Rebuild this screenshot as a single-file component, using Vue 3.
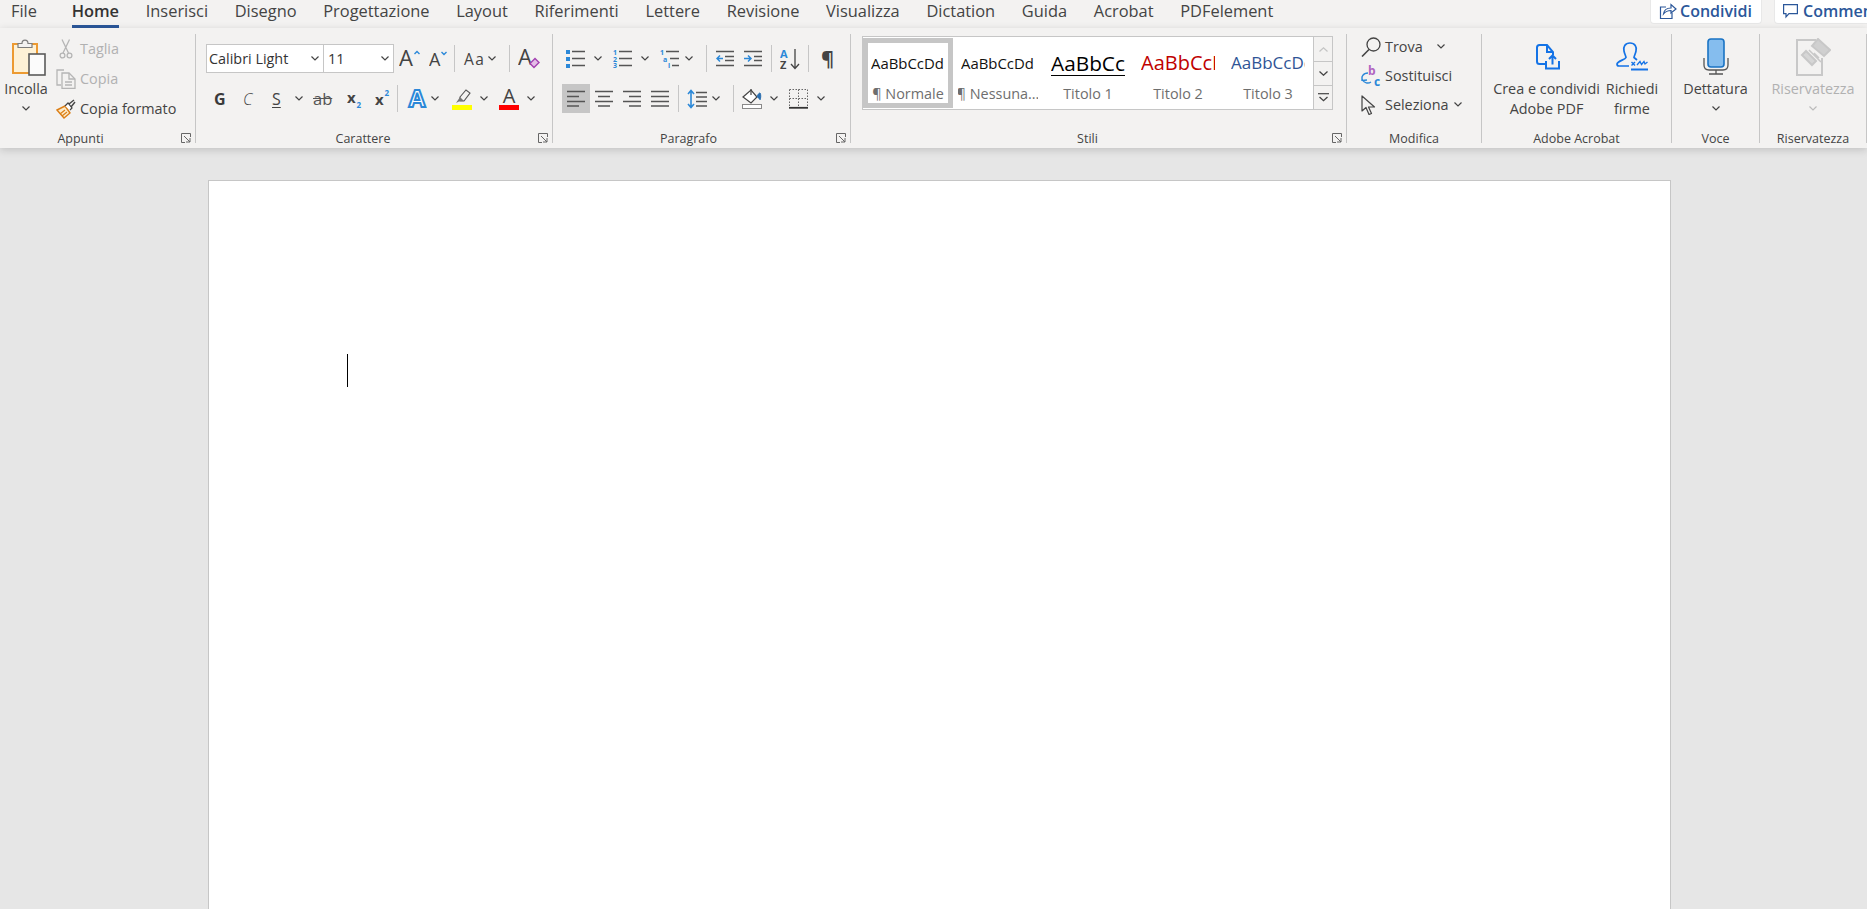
<script setup>
const tabs = ['Inserisci','Disegno','Progettazione','Layout','Riferimenti','Lettere','Revisione','Visualizza','Dictation','Guida','Acrobat','PDFelement']
const styles = [
  { name: '¶ Normale', sample: 'AaBbCcDd', cls: 'normal', sel: true },
  { name: '¶ Nessuna...', sample: 'AaBbCcDd', cls: 'normal' },
  { name: 'Titolo 1', sample: 'AaBbCc', cls: 't1' },
  { name: 'Titolo 2', sample: 'AaBbCcDd', cls: 't2' },
  { name: 'Titolo 3', sample: 'AaBbCcDd', cls: 't3' }
]
</script>

<template>
  <div class="app">
    <header class="tabbar">
      <span class="tab file">File</span>
      <span class="tab home">Home</span>
      <span v-for="t in tabs" :key="t" class="tab">{{ t }}</span>
      <div class="actions">
        <button class="action share">
          <svg width="18" height="18" viewBox="0 0 18 18" fill="none" stroke="#2b579a" stroke-width="1.2"><path d="M7 5H1.5V16.5H13V11"/><path d="M4.5 12C5 8 8 6 12 6V2.5L17 7L12 11V8.5C9 8.5 6.5 9.5 4.5 12Z"/></svg>
          <span>Condividi</span>
        </button>
        <button class="action comment">
          <svg width="15" height="16" viewBox="0 0 15 16" fill="none" stroke="#2b579a" stroke-width="1.2"><path d="M.6 1.6H14.4V10.6H6L3 14V10.6H.6Z"/></svg>
          <span>Commenti</span>
        </button>
      </div>
    </header>

    <section class="ribbon">
      <!-- Appunti -->
      <div class="group g1">
        <div class="body clip">
          <div class="paste">
            <svg class="paste-ic" width="34" height="38" viewBox="0 0 34 38">
              <rect x="1" y="6" width="24" height="29" fill="#fdf1d6" stroke="#ec9a32" stroke-width="2"/>
              <path d="M6 9.5V5.5H10C10 1 16 1 16 5.5H20V9.5Z" fill="#f3f2f1" stroke="#7c7c7c" stroke-width="1.2"/>
              <rect x="17" y="16" width="16" height="21" fill="#fbfbfb" stroke="#5a5a5a" stroke-width="1.6"/>
            </svg>
            <span class="btn-text">Incolla</span>
            <svg class="chev-big" width="8" height="5" viewBox="0 0 8 5"><path d="M.5.5L4 4L7.5.5" fill="none" stroke="#444" stroke-width="1.2"/></svg>
          </div>
          <div class="clip-col">
            <div class="clip-row off">
              <span class="cell"><svg width="14" height="20" viewBox="0 0 14 20" fill="none" stroke="#b5b5b5" stroke-width="1.3"><path d="M3 .5L9.5 14M10.5 .5L4 14"/><circle cx="3.5" cy="16.5" r="2.4"/><circle cx="10.5" cy="16.5" r="2.4"/></svg></span>
              <span>Taglia</span>
            </div>
            <div class="clip-row off">
              <span class="cell"><svg width="20" height="20" viewBox="0 0 20 20" fill="none" stroke="#b5b5b5" stroke-width="1.3"><path d="M8 1H1V16H5"/><path d="M6 4H13L19 10V19.5H6Z"/><path d="M13 4V10H19M9 13H16M9 16H16"/></svg></span>
              <span>Copia</span>
            </div>
            <div class="clip-row">
              <span class="cell"><svg width="20" height="20" viewBox="0 0 20 20" fill="none"><path d="M1 11L9 7L14 14L8 19Z" fill="#fcebca" stroke="#dc7f17" stroke-width="1.4"/><path d="M4 15L9 11M6 17L11 13" stroke="#dc7f17" stroke-width="1.2"/><path d="M9 7L12 4L16 9L14 11" fill="#fff" stroke="#444" stroke-width="1.2"/><path d="M13 5L18 1M15 8L19 3" stroke="#444" stroke-width="1.4"/></svg></span>
              <span>Copia formato</span>
            </div>
          </div>
        </div>
        <div class="glabel p20"><span>Appunti</span><svg class="launch" width="10" height="10" viewBox="0 0 10 10" fill="none" stroke="#666"><path d="M9.5 4V.5H.5V9.5H4"/><path d="M3 3L9 9M9 5V9H5"/></svg></div>
      </div>

      <!-- Carattere -->
      <div class="group g2">
        <div class="body rows">
          <div class="row cr1">
            <div class="combo font"><span>Calibri Light</span><svg width="8" height="5" viewBox="0 0 8 5"><path d="M.5.5L4 4L7.5.5" fill="none" stroke="#444" stroke-width="1.2"/></svg></div>
            <div class="combo size"><span>11</span><svg width="8" height="5" viewBox="0 0 8 5"><path d="M.5.5L4 4L7.5.5" fill="none" stroke="#444" stroke-width="1.2"/></svg></div>
            <svg width="21" height="20" viewBox="0 0 21 20"><text x="0" y="17" font-size="22" fill="#444">A</text><path d="M15.5 5L18 2.5L20.5 5" fill="none" stroke="#2b88d8" stroke-width="1.4"/></svg>
            <svg width="18" height="20" viewBox="0 0 18 20"><text x="0" y="17" font-size="18" fill="#444">A</text><path d="M12.5 3L15 5.5L17.5 3" fill="none" stroke="#2b88d8" stroke-width="1.4"/></svg>
            <i class="sep"></i>
            <span class="aa">Aa</span>
            <svg width="8" height="5" viewBox="0 0 8 5"><path d="M.5.5L4 4L7.5.5" fill="none" stroke="#444" stroke-width="1.2"/></svg>
            <i class="sep"></i>
            <svg width="22" height="22" viewBox="0 0 22 22"><text x="0" y="17" font-size="22" fill="#444">A</text><path d="M12 15.5L17 10.5L21 14.5L16 19.5Z" fill="#e4bde7" stroke="#a23fb0" stroke-width="1.4"/></svg>
          </div>
          <div class="row cr2">
            <span class="fx b">G</span>
            <span class="fx it">C</span>
            <span class="fx un">S</span>
            <svg width="8" height="5" viewBox="0 0 8 5"><path d="M.5.5L4 4L7.5.5" fill="none" stroke="#444" stroke-width="1.2"/></svg>
            <span class="fx st">ab</span>
            <svg width="16" height="20" viewBox="0 0 16 20"><text x="0" y="14" class="t-b" font-size="15" fill="#444">x</text><text x="9.5" y="19" class="t-b" font-size="8" fill="#2b88d8">2</text></svg>
            <svg width="16" height="20" viewBox="0 0 16 20"><text x="0" y="16" class="t-b" font-size="15" fill="#444">x</text><text x="9.5" y="7" class="t-b" font-size="8" fill="#2b88d8">2</text></svg>
            <i class="sep"></i>
            <svg width="20" height="21" viewBox="0 0 20 21"><text x="10" y="19" text-anchor="middle" class="t-b" font-size="24" fill="#fff" stroke="#2b88d8" stroke-width="2">A</text></svg>
            <svg width="8" height="5" viewBox="0 0 8 5"><path d="M.5.5L4 4L7.5.5" fill="none" stroke="#444" stroke-width="1.2"/></svg>
            <svg width="20" height="22" viewBox="0 0 20 22"><path d="M8 9L14 2L18 5L12 13L8 13Z" fill="none" stroke="#555" stroke-width="1.1"/><path d="M8 9L12 13L8 13L4 15Z" fill="#777"/><rect y="17" width="20" height="5" fill="#ffff00"/></svg>
            <svg width="8" height="5" viewBox="0 0 8 5"><path d="M.5.5L4 4L7.5.5" fill="none" stroke="#444" stroke-width="1.2"/></svg>
            <svg width="20" height="22" viewBox="0 0 20 22"><text x="10" y="15" text-anchor="middle" font-size="20" fill="#444">A</text><rect y="17" width="20" height="5" fill="#ff0000"/></svg>
            <svg width="8" height="5" viewBox="0 0 8 5"><path d="M.5.5L4 4L7.5.5" fill="none" stroke="#444" stroke-width="1.2"/></svg>
          </div>
        </div>
        <div class="glabel p8"><span>Carattere</span><svg class="launch" width="10" height="10" viewBox="0 0 10 10" fill="none" stroke="#666"><path d="M9.5 4V.5H.5V9.5H4"/><path d="M3 3L9 9M9 5V9H5"/></svg></div>
      </div>

      <!-- Paragrafo -->
      <div class="group g3">
        <div class="body rows">
          <div class="row pr1">
            <svg width="19" height="19" viewBox="0 0 19 19"><g fill="#2b88d8"><rect y="1" width="4" height="4"/><rect y="8" width="4" height="4"/><rect y="15" width="4" height="4"/></g><path d="M6 2.5H19M6 9.5H19M6 16.5H19" stroke="#555" stroke-width="1.4"/></svg>
            <svg width="8" height="5" viewBox="0 0 8 5"><path d="M.5.5L4 4L7.5.5" fill="none" stroke="#444" stroke-width="1.2"/></svg>
            <svg width="19" height="19" viewBox="0 0 19 19"><g class="t-b" font-size="7" fill="#2b88d8"><text x="0" y="6">1</text><text x="0" y="13">2</text><text x="0" y="19">3</text></g><path d="M6 2.5H19M6 9.5H19M6 16.5H19" stroke="#555" stroke-width="1.4"/></svg>
            <svg width="8" height="5" viewBox="0 0 8 5"><path d="M.5.5L4 4L7.5.5" fill="none" stroke="#444" stroke-width="1.2"/></svg>
            <svg width="19" height="19" viewBox="0 0 19 19"><g class="t-b" font-size="7" fill="#2b88d8"><text x="0" y="6">1</text><text x="3" y="13">a</text><text x="8" y="19">i</text></g><path d="M6 2.5H19M10 9.5H19M12 16.5H19" stroke="#555" stroke-width="1.4"/></svg>
            <svg width="8" height="5" viewBox="0 0 8 5"><path d="M.5.5L4 4L7.5.5" fill="none" stroke="#444" stroke-width="1.2"/></svg>
            <i class="sep"></i>
            <svg width="18" height="19" viewBox="0 0 18 19"><path d="M0 2.5H18M9 7.5H18M9 11.5H18M0 16.5H18" stroke="#555" stroke-width="1.4"/><path d="M7 9.5H1M4 6.5L1 9.5L4 12.5" fill="none" stroke="#2b88d8" stroke-width="1.5"/></svg>
            <svg width="18" height="19" viewBox="0 0 18 19"><path d="M0 2.5H18M10 7.5H18M10 11.5H18M0 16.5H18" stroke="#555" stroke-width="1.4"/><path d="M0 9.5H7M4 6.5L7 9.5L4 12.5" fill="none" stroke="#2b88d8" stroke-width="1.5"/></svg>
            <i class="sep"></i>
            <svg width="21" height="22" viewBox="0 0 21 22"><text x="0" y="10" class="t-b" font-size="11" fill="#2b88d8">A</text><text x="0" y="21" class="t-b" font-size="11" fill="#444">Z</text><path d="M15 1V20M11 16L15 20.5L19 16" fill="none" stroke="#444" stroke-width="1.3"/></svg>
            <i class="sep"></i>
            <span class="pil">¶</span>
          </div>
          <div class="row pr2">
            <span class="active">
              <svg width="18" height="17" viewBox="0 0 18 17"><path d="M0 1.5H18M0 6.5H12M0 11.5H18M0 16H12" stroke="#555" stroke-width="1.4"/></svg>
            </span>
            <svg width="18" height="17" viewBox="0 0 18 17"><path d="M0 1.5H18M3 6.5H15M0 11.5H18M3 16H15" stroke="#555" stroke-width="1.4"/></svg>
            <svg width="18" height="17" viewBox="0 0 18 17"><path d="M0 1.5H18M6 6.5H18M0 11.5H18M6 16H18" stroke="#555" stroke-width="1.4"/></svg>
            <svg width="18" height="17" viewBox="0 0 18 17"><path d="M0 1.5H18M0 6.5H18M0 11.5H18M0 16H18" stroke="#555" stroke-width="1.4"/></svg>
            <i class="sep"></i>
            <svg width="20" height="20" viewBox="0 0 20 20"><path d="M4 1V19M1 5L4 1.5L7 5M1 15L4 18.5L7 15" fill="none" stroke="#2b88d8" stroke-width="1.6"/><path d="M9 3.5H20M9 8H20M9 12.5H20M9 17H20" stroke="#555" stroke-width="1.4"/></svg>
            <svg width="8" height="5" viewBox="0 0 8 5"><path d="M.5.5L4 4L7.5.5" fill="none" stroke="#444" stroke-width="1.2"/></svg>
            <i class="sep"></i>
            <svg width="20" height="21" viewBox="0 0 20 21" fill="none"><path d="M1 9L9 2L15 9L9 15Z" fill="#fff" stroke="#444" stroke-width="1.2"/><path d="M9 1V7" stroke="#444" stroke-width="1.2"/><path d="M15 9C16 6 17 5 18 5C19 6 19 10 18 12" fill="#2b6fb0" stroke="#2b6fb0"/><rect x=".5" y="16.5" width="19" height="4" fill="#fff" stroke="#8a8a8a"/></svg>
            <svg width="8" height="5" viewBox="0 0 8 5"><path d="M.5.5L4 4L7.5.5" fill="none" stroke="#444" stroke-width="1.2"/></svg>
            <svg width="19" height="20" viewBox="0 0 19 20" fill="none"><path d="M.5.5H18.5V18M.5.5V18M9.5.5V18M.5 9.5H18.5" stroke="#666" stroke-dasharray="1.5 1.5"/><path d="M0 18.8H19" stroke="#333" stroke-width="1.8"/></svg>
            <svg width="8" height="5" viewBox="0 0 8 5"><path d="M.5.5L4 4L7.5.5" fill="none" stroke="#444" stroke-width="1.2"/></svg>
          </div>
        </div>
        <div class="glabel p12"><span>Paragrafo</span><svg class="launch" width="10" height="10" viewBox="0 0 10 10" fill="none" stroke="#666"><path d="M9.5 4V.5H.5V9.5H4"/><path d="M3 3L9 9M9 5V9H5"/></svg></div>
      </div>

      <!-- Stili -->
      <div class="group g4">
        <div class="body">
          <div class="gallery">
            <div v-for="s in styles" :key="s.name" class="style" :class="{ sel: s.sel }">
              <div class="sample" :class="s.cls"><span>{{ s.sample }}</span></div>
              <div class="sname">{{ s.name }}</div>
            </div>
            <div class="scroll">
              <span class="sb"><svg width="9" height="5" viewBox="0 0 9 5"><path d="M.5 4.5L4.5 .8L8.5 4.5" fill="none" stroke="#c4c4c4" stroke-width="1.2"/></svg></span>
              <span class="sb"><svg width="9" height="5" viewBox="0 0 9 5"><path d="M.5.5L4.5 4.2L8.5.5" fill="none" stroke="#444" stroke-width="1.3"/></svg></span>
              <span class="sb"><svg width="11" height="9" viewBox="0 0 11 9"><path d="M0 .7H11" stroke="#444" stroke-width="1.2"/><path d="M1.5 4L5.5 7.7L9.5 4" fill="none" stroke="#444" stroke-width="1.3"/></svg></span>
            </div>
          </div>
        </div>
        <div class="glabel p8"><span>Stili</span><svg class="launch" width="10" height="10" viewBox="0 0 10 10" fill="none" stroke="#666"><path d="M9.5 4V.5H.5V9.5H4"/><path d="M3 3L9 9M9 5V9H5"/></svg></div>
      </div>

      <!-- Modifica -->
      <div class="group g5">
        <div class="body edit">
          <div class="erow">
            <span class="ecell"><svg width="20" height="20" viewBox="0 0 20 20" fill="none" stroke="#444" stroke-width="1.3"><circle cx="12.5" cy="7.5" r="6.5"/><path d="M8 12.5L1 19.5" stroke-width="1.6"/></svg></span>
            <span>Trova</span>
            <svg class="c18" width="8" height="5" viewBox="0 0 8 5"><path d="M.5.5L4 4L7.5.5" fill="none" stroke="#444" stroke-width="1.2"/></svg>
          </div>
          <div class="erow">
            <span class="ecell"><svg width="20" height="22" viewBox="0 0 20 22" fill="none"><text x="7" y="10" class="t-b" font-size="12" fill="#b164c0">b</text><text x="13" y="21" class="t-b" font-size="12" fill="#2b88d8">c</text><path d="M7 8C2 8 0 12 1.5 15C3 18 7 19 10 17M1 16V11.5M1.5 15.5L6 15" stroke="#2b88d8" stroke-width="1.4"/></svg></span>
            <span>Sostituisci</span>
          </div>
          <div class="erow">
            <span class="ecell"><svg width="15" height="20" viewBox="0 0 15 20"><path d="M1 1V16L5 12.5L8 19.5L10.5 18.5L7.5 12H13.5Z" fill="#f3f2f1" stroke="#444" stroke-width="1.2" stroke-linejoin="round"/></svg></span>
            <span>Seleziona</span>
            <svg class="c5" width="8" height="5" viewBox="0 0 8 5"><path d="M.5.5L4 4L7.5.5" fill="none" stroke="#444" stroke-width="1.2"/></svg>
          </div>
        </div>
        <div class="glabel"><span>Modifica</span></div>
      </div>

      <!-- Adobe Acrobat -->
      <div class="group g6">
        <div class="body acro">
          <div class="big w114">
            <div class="big-ic shift"><svg width="24" height="26" viewBox="0 0 24 26" fill="none" stroke="#1473e6" stroke-width="2"><path d="M9 20H3.5C2 20 1 19 1 17.5V3.5C1 2 2 1 3.5 1H11L17 8V11"/><path d="M11 1V8H17"/><path d="M10 17V24.5H23V17"/><path d="M16.5 20.5V11.5M13 15L16.5 11.5L20 15"/></svg></div>
            <span class="btn-text">Crea e condividi<br>Adobe PDF</span>
          </div>
          <div class="big w56">
            <div class="big-ic"><svg width="32" height="29" viewBox="0 0 32 29" fill="none" stroke="#1473e6" stroke-width="1.7"><path d="M14 1C9 1 7 5 8 9C8.5 12 10 14 10 15.5C9 18 2 18.5 1 22C1 23.5 2 24 3 24H13"/><path d="M14 1C19 1 21 5 20 9C19.5 12 18 14 18 15.5L21 18"/><path d="M15.5 20L19 23.5M19 20L15.5 23.5" stroke-width="1.4"/><path d="M21 23L24 19.5L25.5 22.5L28 19.5L29 22L31.5 20" stroke-width="1.3"/><path d="M15 27.5H32" stroke-width="2"/></svg></div>
            <span class="btn-text">Richiedi<br>firme</span>
          </div>
        </div>
        <div class="glabel"><span>Adobe Acrobat</span></div>
      </div>

      <!-- Voce -->
      <div class="group g7">
        <div class="body single">
          <div class="big-ic"><svg width="26" height="37" viewBox="0 0 26 37" fill="none"><rect x="5" y="1" width="16" height="28" rx="3" fill="#85bdee" stroke="#1a73c4" stroke-width="1.6"/><path d="M1 20V27C1 30 3 32 6 32H20C23 32 25 30 25 27V20" stroke="#555" stroke-width="1.3"/><path d="M13 32V36M6 36H20" stroke="#555" stroke-width="1.3"/></svg></div>
          <span class="btn-text">Dettatura</span>
          <svg class="chev-big" width="8" height="5" viewBox="0 0 8 5"><path d="M.5.5L4 4L7.5.5" fill="none" stroke="#444" stroke-width="1.2"/></svg>
        </div>
        <div class="glabel"><span>Voce</span></div>
      </div>

      <!-- Riservatezza -->
      <div class="group g8">
        <div class="body single off">
          <div class="big-ic"><svg width="35" height="38" viewBox="0 0 35 38" fill="none" stroke="#c8c8c8" stroke-width="2"><path d="M20 2H1V37H26V20"/><path d="M6 17L16 27L20 23L10 13Z" fill="#d6d6d6"/><path d="M13 12L25 24M18 15L23 20" stroke-width="1.5"/><path d="M16 8L22 1L34 12L28 18Z" fill="#d0d0d0"/></svg></div>
          <span class="btn-text">Riservatezza</span>
          <svg class="chev-big" width="8" height="5" viewBox="0 0 8 5"><path d="M.5.5L4 4L7.5.5" fill="none" stroke="#bbb" stroke-width="1.2"/></svg>
        </div>
        <div class="glabel"><span>Riservatezza</span></div>
      </div>
    </section>

    <main class="canvas">
      <div class="page"><div class="caret"></div></div>
    </main>
  </div>
</template>

<style>
html, body { margin: 0; background: #e6e6e6; overflow: hidden; }
</style>

<style scoped>
.app { width: 1867px; height: 909px; overflow: hidden; display: flex; flex-direction: column; font-family: "Open Sans", "Noto Sans", sans-serif; color: #444; background: #e6e6e6; }
.tabbar { flex: none; height: 28px; background: #f3f2f1; display: flex; gap: 26.7px; padding-left: 11px; font-size: 16.4px; }
.tab { height: 25px; line-height: 22px; white-space: nowrap; }
.file { margin-right: 8px; }
.home { font-weight: 600; color: #333; box-shadow: 0 3px 0 #2b579a; }
.actions { margin-left: auto; margin-right: -20px; display: flex; gap: 12px; height: 24px; }
.action { height: 24px; box-sizing: border-box; display: flex; align-items: center; background: #fff; border: 1px solid #e8e8e8; border-top: 0; border-radius: 0 0 4px 4px; color: #2b579a; font: 600 16px "Open Sans", sans-serif; padding: 0 0 2px 8px; white-space: nowrap; overflow: hidden; }
.share { width: 112px; gap: 3px; }
.comment { width: 113px; gap: 5px; }

.ribbon { flex: none; height: 120px; box-sizing: border-box; padding: 6px 0 5px; background: #f3f2f1; display: flex; box-shadow: 0 2px 8px rgba(0,0,0,.16); position: relative; }
.group { box-sizing: border-box; border-right: 1px solid #c6c6c6; display: flex; flex-direction: column; flex: none; }
.g1 { width: 196px; } .g2 { width: 357px; } .g3 { width: 298px; } .g4 { width: 496px; }
.g5 { width: 135px; } .g6 { width: 190px; } .g7 { width: 88px; } .g8 { width: 107px; }
.body { height: 96px; flex: none; font-size: 14.4px; }
.glabel { height: 13px; line-height: 18px; font-size: 12.5px; display: flex; color: #444; }
.glabel span { flex: 1; text-align: center; }
.launch { flex: none; margin: 3px 4px 0 0; }
.p20 span { padding-right: 20px; }
.p8 span { padding-right: 8px; }
.p12 span { padding-right: 12px; }

.clip { display: flex; }
.paste { width: 52px; padding-top: 4px; display: flex; flex-direction: column; box-sizing: border-box; align-items: center; }
.paste-ic { align-self: flex-start; margin-left: 12px; margin-bottom: 3px; }
.btn-text { line-height: 20px; text-align: center; white-space: nowrap; font-size: 14.4px; display: block; }
.chev-big { margin-top: 7px; display: block; }
.clip-col { margin-left: 4px; margin-top: -1px; }
.clip-row { height: 30px; display: flex; align-items: center; font-size: 14.4px; white-space: nowrap; }
.off { color: #b1b1b1; }
.cell { width: 24px; display: flex; padding-right: 4px; box-sizing: border-box; justify-content: center; margin-top: 2px; }

.rows { padding-top: 10px; box-sizing: border-box; display: flex; flex-direction: column; gap: 11px; }
.row { height: 29px; display: grid; align-items: center; justify-items: start; }
.cr1 { padding-left: 10px; grid-template-columns: 118px 75px 30px 25px 10px 24px 21px 9px auto; }
.cr2 { padding-left: 18px; grid-template-columns: 29px 29px 23px 18px 34px 28px 22px 10px 24px 21px 28px 19px 28px auto; }
.pr1 { padding-left: 13px; grid-template-columns: 28px 19px 28px 19px 25px 21px 10px 28px 27px 9px 28px 13px auto; }
.pr2 { padding-left: 9px; grid-template-columns: 33px 28px 28px 27px 9px 25px 21px 9px 28px 19px 28px auto; }
.sep { display: block; width: 1px; height: 27px; background: #c6c6c6; }
.combo { box-sizing: border-box; height: 29px; background: #fff; border: 1px solid #c6c6c6; display: flex; align-items: center; justify-content: space-between; padding: 0 4px 0 2px; font-size: 14.4px; color: #333; }
.font { width: 118px; }
.size { width: 71px; margin-left: -1px; padding-left: 4px; }
.aa { font-size: 15.5px; letter-spacing: 1.5px; line-height: 22px; color: #444; }
.fx { font-size: 16px; line-height: 22px; }
.b { font-weight: 700; font-size: 16px; color: #3a3a3a; }
.it { font-size: 16px; font-style: italic; font-weight: 300; }
.un { text-decoration: underline; text-underline-offset: 2px; font-size: 16px; }
.st { text-decoration: line-through; font-size: 16.5px; color: #555; }
.pil { font-size: 20px; font-weight: 700; line-height: 28px; color: #444; }
.active { width: 28px; height: 29px; background: #c6c6c6; display: flex; align-items: center; justify-content: center; }
svg text { font-family: "Open Sans", sans-serif; }
.t-b { font-weight: 700; }

.g4 .body { padding: 2px 0 0 11px; box-sizing: border-box; }
.gallery { box-sizing: border-box; width: 471px; height: 74px; background: #fff; border: 1px solid #c6c6c6; display: flex; }
.style { box-sizing: border-box; flex: none; width: 90px; height: 70px; margin: 1px 0; border: 5px solid transparent; display: flex; flex-direction: column; align-items: center; overflow: hidden; }
.sel { border-color: #c6c6c6; }
.sample { width: 74px; height: 40px; line-height: 40px; overflow: hidden; white-space: nowrap; text-align: left; flex: none; }
.normal { font-size: 14.9px; color: #111; }
.t1 { font-size: 20.8px; color: #000; font-weight: 500; }
.t1 span { display: inline-block; line-height: 23px; border-bottom: 1.5px solid #000; }
.t2 { font-size: 20px; color: #c00000; font-weight: 500; }
.t3 { font-size: 17px; color: #2f5496; }
.sname { font-size: 14.4px; line-height: 22px; color: #6e6e6e; white-space: nowrap; }
.scroll { flex: none; width: 19px; box-sizing: border-box; border-left: 1px solid #c6c6c6; background: #f3f2f1; display: flex; flex-direction: column; }
.sb { box-sizing: border-box; flex: 1; display: flex; align-items: center; justify-content: center; border-bottom: 1px solid #c6c6c6; }
.sb:first-child { flex: none; height: 25px; }
.sb:last-child { border-bottom: 0; }

.edit { padding-left: 14px; }
.erow { height: 29px; display: flex; align-items: center; white-space: nowrap; }
.erow:first-child { margin-top: -2px; }
.ecell { width: 24px; flex: none; display: flex; }
.c18 { margin-left: 14px; }
.c5 { margin-left: 5px; }

.acro { display: flex; padding-left: 7px; }
.big { display: flex; flex-direction: column; align-items: center; }
.w114 { width: 115px; }
.w56 { width: 56px; }
.big-ic { height: 45px; display: flex; align-items: center; justify-content: center; }
.shift { padding-left: 3px; }
.single { display: flex; flex-direction: column; align-items: center; }

.canvas { flex: 1; padding: 32px 0 0 208px; }
.page { box-sizing: border-box; width: 1463px; height: 1200px; background: #fff; border: 1px solid #c6c6c6; padding: 173px 0 0 138px; }
.caret { width: 1px; height: 33px; background: #000; }
</style>
